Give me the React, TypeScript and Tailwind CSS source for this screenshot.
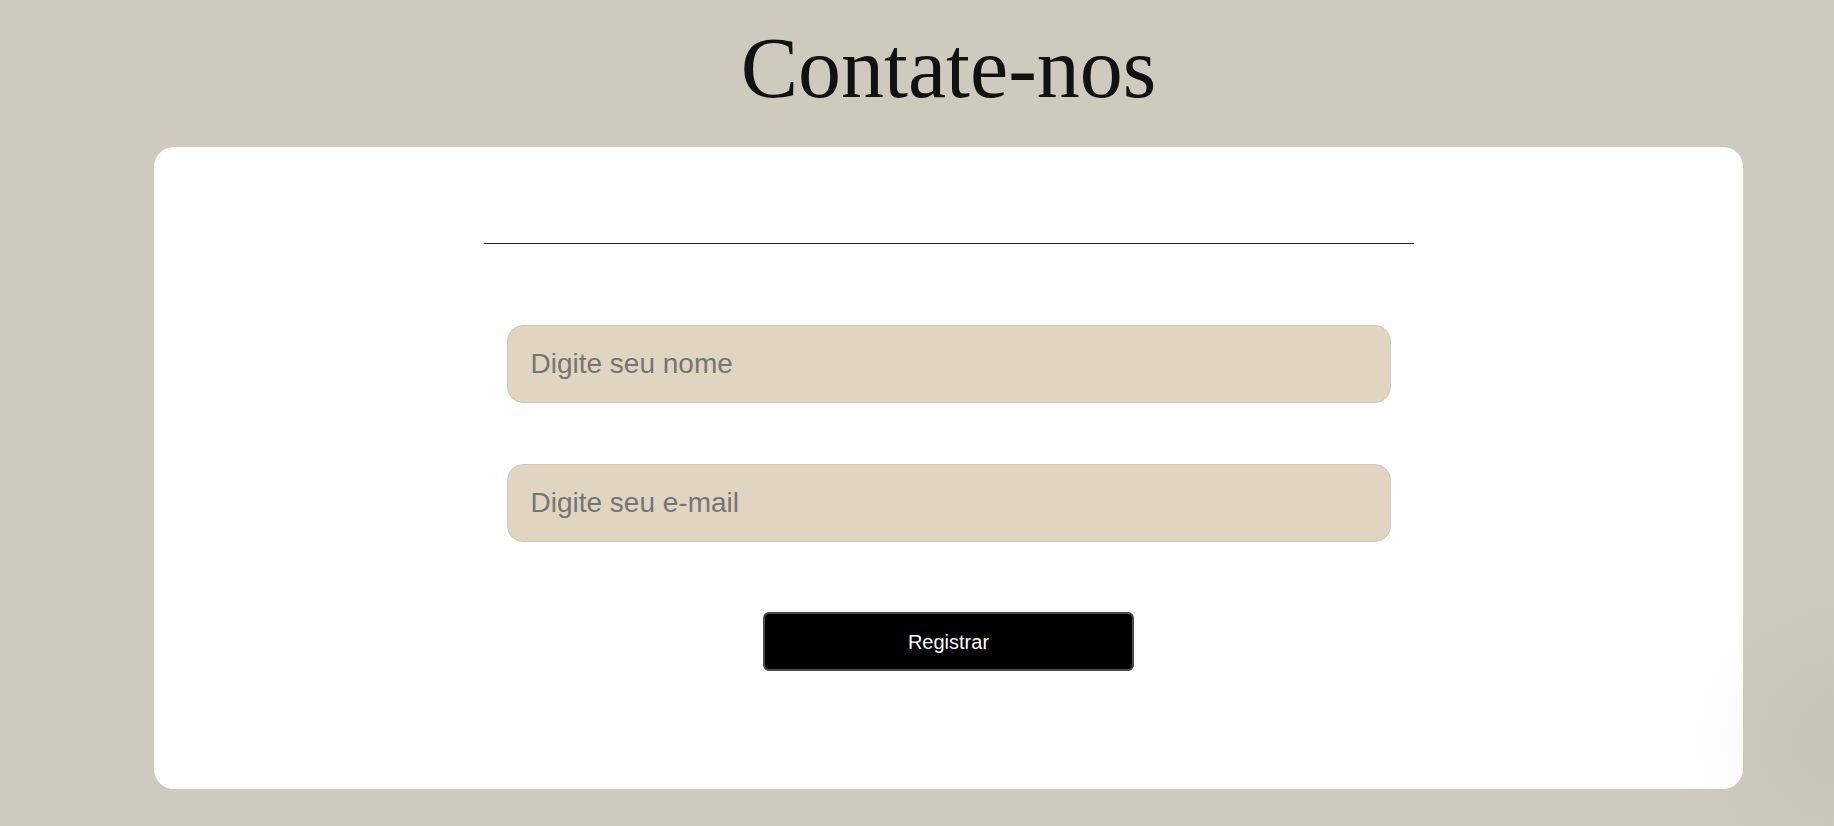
import React from 'react';

export default function App() {
  return (
    <div className="relative h-[826px] w-full overflow-hidden bg-[#cecabe]">
      {/* soft glow bottom right */}
      <div className="pointer-events-none absolute right-[-180px] top-[570px] h-[340px] w-[340px] rounded-full bg-[radial-gradient(circle,rgba(60,50,30,0.05),rgba(60,50,30,0)_70%)]" />

      <div className="ml-[154px] flex w-[1589px] flex-col items-center">
        <h1
          className="mt-[25px] mb-[36px] h-[86px] text-[86px] leading-[86px] text-[#111111]"
          style={{ fontFamily: '"Liberation Serif", "DejaVu Serif", serif' }}
        >
          Contate-nos
        </h1>

        <form
          className="flex w-full flex-col items-center rounded-[20px] bg-white pt-[96px] pb-[118px]"
          style={{ fontFamily: '"Liberation Sans", Arial, sans-serif' }}
          onSubmit={(e) => e.preventDefault()}
        >
          <div className="h-px w-[930px] bg-[#222222]" />

          <input
            type="text"
            placeholder="Digite seu nome"
            className="mt-[81px] h-[78px] w-[884px] rounded-[16px] border border-[#cfc9bc] bg-[#dfd5c1] px-[23px] text-[28px] text-[#333] outline-none placeholder:text-[#757575]"
          />

          <input
            type="email"
            placeholder="Digite seu e-mail"
            className="mt-[61px] h-[78px] w-[884px] rounded-[16px] border border-[#cfc9bc] bg-[#dfd5c1] px-[23px] text-[28px] text-[#333] outline-none placeholder:text-[#757575]"
          />

          <button
            type="submit"
            className="mt-[70px] h-[59px] w-[371px] rounded-[6px] border-2 border-[#4a4a4a] bg-black text-[20px] text-white"
          >
            Registrar
          </button>
        </form>
      </div>
    </div>
  );
}
